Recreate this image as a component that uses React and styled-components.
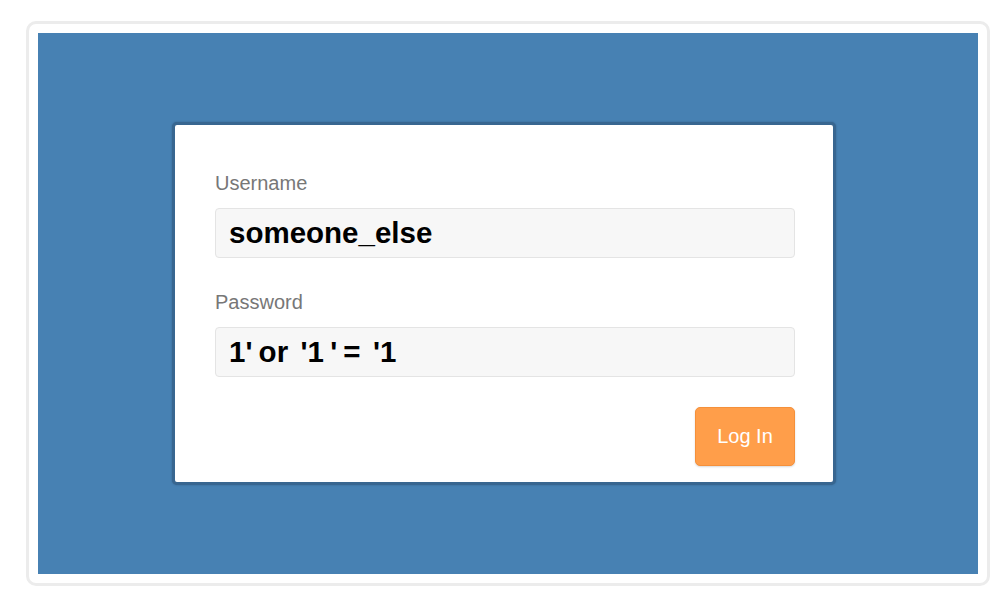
import React from 'react';
import styled, { createGlobalStyle } from 'styled-components';

const GlobalStyle = createGlobalStyle`
  body {
    margin: 0;
    background: #ffffff;
    font-family: "Liberation Sans", Arial, sans-serif;
  }
`;

const Frame = styled.div`
  box-sizing: border-box;
  margin: 21px 0 0 26px;
  width: 964px;
  height: 565px;
  border: 3px solid #ececec;
  border-radius: 10px;
  padding: 9px;
`;

const Stage = styled.div`
  display: flex;
  align-items: center;
  justify-content: center;
  height: 100%;
  padding-right: 8px;
  box-sizing: border-box;
  background: #4781b3;
`;

const Card = styled.div`
  box-sizing: border-box;
  width: 664px;
  height: 363px;
  border: 3px solid #386690;
  border-radius: 5px;
  background: #ffffff;
  box-shadow: 0 0 2px rgba(20, 50, 80, 0.4);
  padding: 46px 38px 16px 40px;
  display: flex;
  flex-direction: column;
`;

const Label = styled.div`
  font-size: 20px;
  line-height: 24px;
  color: #777777;
  margin-top: ${({ $gap }) => $gap || 0}px;
`;

const Field = styled.div`
  box-sizing: border-box;
  margin-top: 13px;
  height: 50px;
  border: 1px solid #e4e4e4;
  border-radius: 4px;
  background: #f7f7f7;
  padding: 0 13px;
  display: flex;
  align-items: center;
  font-size: 29.5px;
  font-weight: bold;
  color: #000000;
  white-space: pre;
  word-spacing: ${({ $tight }) => ($tight ? '-2px' : 'normal')};
`;

const Actions = styled.div`
  display: flex;
  justify-content: flex-end;
  margin-top: 30px;
`;

const Button = styled.button`
  width: 100px;
  height: 59px;
  border: 1px solid #f5903a;
  border-radius: 5px;
  background: #ff9e4a;
  color: #ffffff;
  font-family: "Liberation Sans", Arial, sans-serif;
  font-size: 20px;
  box-shadow: 0 1px 2px rgba(0, 0, 0, 0.15);
  cursor: pointer;
`;

export default function App() {
  return (
    <>
      <GlobalStyle />
      <Frame>
        <Stage>
          <Card>
            <Label>Username</Label>
            <Field>someone_else</Field>
            <Label $gap={32}>Password</Label>
            <Field $tight>{"1' or  '1 ' =  '1"}</Field>
            <Actions>
              <Button>Log In</Button>
            </Actions>
          </Card>
        </Stage>
      </Frame>
    </>
  );
}
